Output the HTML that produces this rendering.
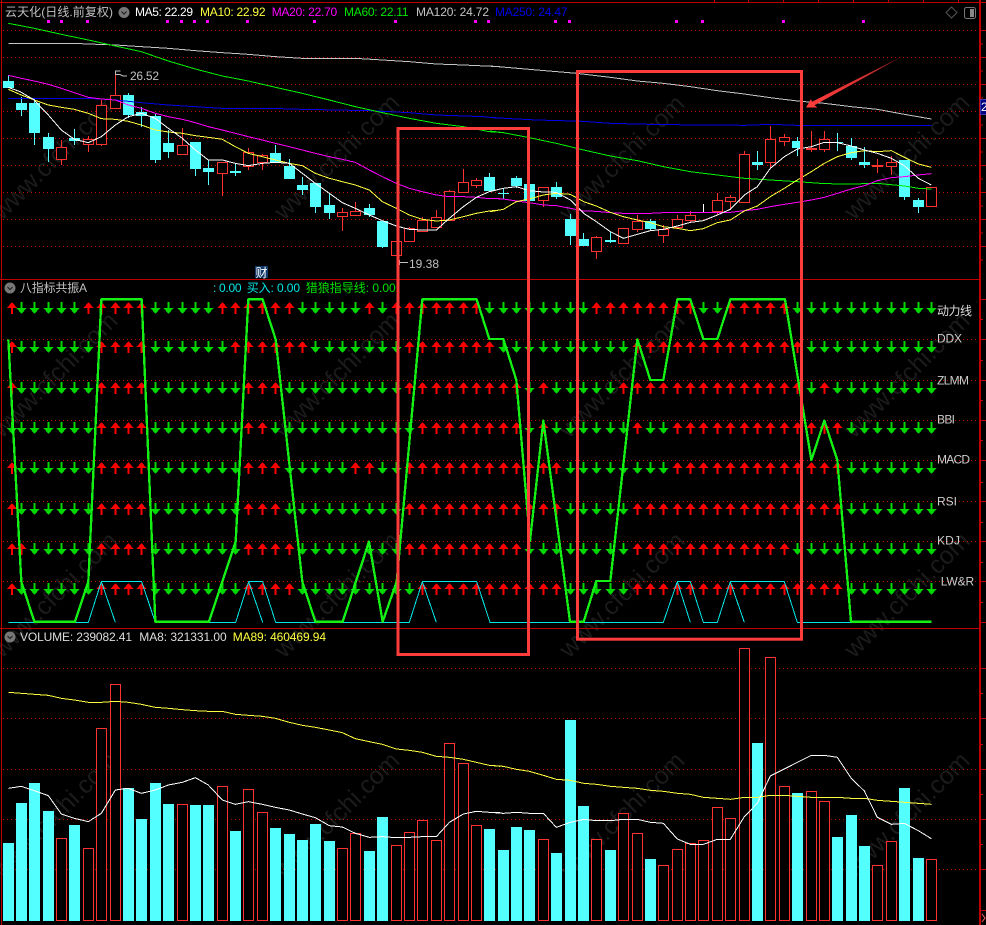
<!DOCTYPE html>
<html><head><meta charset="utf-8"><title>云天化</title>
<style>
html,body{margin:0;padding:0;background:#000;overflow:hidden}
svg{display:block}
text{font-family:"Liberation Sans","Noto Sans CJK SC",sans-serif;font-size:12px}
.t{fill:none;stroke-width:3;stroke-linejoin:round;shape-rendering:crispEdges}
.g{fill:none;stroke-width:7;stroke-linejoin:round;stroke:#14f014;shape-rendering:crispEdges}
.wm text{font-size:25px;fill:#1b1b1b}
</style></head><body>
<svg id="s" xmlns="http://www.w3.org/2000/svg" width="986" height="925" viewBox="0 0 986 925">
<rect width="986" height="925" fill="#000"/>
<g class="wm">
<text transform="translate(55 157) rotate(-45)" text-anchor="middle" y="8">www.cfchi.com</text>
<text transform="translate(337 157) rotate(-45)" text-anchor="middle" y="8">www.cfchi.com</text>
<text transform="translate(622 158) rotate(-45)" text-anchor="middle" y="8">www.cfchi.com</text>
<text transform="translate(907 157) rotate(-45)" text-anchor="middle" y="8">www.cfchi.com</text>
<text transform="translate(55 375) rotate(-45)" text-anchor="middle" y="8">www.cfchi.com</text>
<text transform="translate(337 375) rotate(-45)" text-anchor="middle" y="8">www.cfchi.com</text>
<text transform="translate(622 375) rotate(-45)" text-anchor="middle" y="8">www.cfchi.com</text>
<text transform="translate(907 375) rotate(-45)" text-anchor="middle" y="8">www.cfchi.com</text>
<text transform="translate(55 595) rotate(-45)" text-anchor="middle" y="8">www.cfchi.com</text>
<text transform="translate(337 595) rotate(-45)" text-anchor="middle" y="8">www.cfchi.com</text>
<text transform="translate(622 595) rotate(-45)" text-anchor="middle" y="8">www.cfchi.com</text>
<text transform="translate(907 595) rotate(-45)" text-anchor="middle" y="8">www.cfchi.com</text>
<text transform="translate(55 815) rotate(-45)" text-anchor="middle" y="8">www.cfchi.com</text>
<text transform="translate(337 815) rotate(-45)" text-anchor="middle" y="8">www.cfchi.com</text>
<text transform="translate(622 815) rotate(-45)" text-anchor="middle" y="8">www.cfchi.com</text>
<text transform="translate(907 815) rotate(-45)" text-anchor="middle" y="8">www.cfchi.com</text>
</g>
<path fill="none" stroke="#c00000" stroke-dasharray="1 3" d="M3 30.5H979M3 57.5H979M3 84.5H979M3 111.5H979M3 138.5H979M3 165.5H979M3 192.5H979M3 219.5H979M3 246.5H979M3 339.5H979M3 380.5H979M3 420.5H979M3 460.5H979M3 501.5H979M3 541.5H979M3 581.5H979M3 668.5H979M3 718.5H979M3 769.5H979M3 819.5H979M3 869.5H979"/>
<path fill="none" stroke="#c00000" d="M0 2.5H986M1.5 0V925M0 279.5H980M0 628.5H980M714.5 0V2M748.5 0V2M783.5 0V2M818.5 0V2M853.5 0V2M888.5 0V2M923.5 0V2M958.5 0V2"/>
<path fill="none" stroke="#c00000" stroke-width="2" d="M980 0V925"/>
<path fill="none" stroke="#c00000" d="M980 30.5h6M980 44h3M980 57.5h6M980 71h3M980 84.5h6M980 98h3M980 111.5h6M980 125h3M980 138.5h6M980 152h3M980 165.5h6M980 179h3M980 192.5h6M980 206h3M980 219.5h6M980 233h3M980 246.5h6M980 260h3M980 299.5h6M980 319.5h3M980 339.5h6M980 360.5h3M980 380.5h6M980 400.5h3M980 420.5h6M980 440.5h3M980 460.5h6M980 482.5h3M980 501.5h6M980 522.5h3M980 541.5h6M980 562.5h3M980 581.5h6M980 602.5h3M980 622.5h6M980 668.5h6M980 693.5h3M980 718.5h6M980 744.5h3M980 769.5h6M980 794.5h3M980 819.5h6M980 844.5h3M980 869.5h6M980 910.5h6"/>
<path fill="none" stroke="#ff6060" d="M982 914l3 4-3 4"/>
<path d="M47 20h3v3h-3zM60 20h3v3h-3zM86 20h3v3h-3zM166 20h3v3h-3zM180 20h3v3h-3zM193 20h3v3h-3zM206 20h3v3h-3zM246 20h3v3h-3zM313 20h3v3h-3zM394 20h3v3h-3zM474 20h3v3h-3zM487 20h3v3h-3zM554 20h3v3h-3zM568 20h3v3h-3zM675 20h3v3h-3zM701 20h3v3h-3zM782 20h3v3h-3zM862 20h3v3h-3z" fill="#ff00ff"/>
<g id="c"></g>
<g id="a" shape-rendering="crispEdges"></g>
<g id="v"></g>

<!-- price panel lines -->
<g transform="scale(.33333)">
<polyline class="t" stroke="#c4c4c4" points="25,130 240,131 346,135 424,140 505,145 586,152 667,158 745,163 826,170 907,175 1066,175 1147,180 1228,185 1309,192 1390,195 1500,200"/>
<polyline class="t" stroke="#0000e6" points="25,295 265,295 346,300 424,308 505,315 586,320 667,325 807,325 907,328 1108,332 1228,338 1309,345 1450,350 1500,355"/>
<polyline class="t" stroke="#00f000" points="25,70 103,85 184,103 265,120 346,138 424,155 505,183 586,207 667,228 745,243 826,262 907,280 988,300 1066,320 1147,338 1228,355 1309,370 1390,380 1468,395 1500,397"/>
<polyline class="t" stroke="#ff00ff" points="25,226 64,235 103,243 145,253 184,265 223,278 265,292 304,297 346,300 385,315 424,325 466,340 505,350 547,358 586,368 625,380 667,390 706,400 745,410 787,420 826,430 868,440 907,450 946,460 988,470 1027,478 1066,487 1108,510 1147,530 1189,550 1228,565 1267,575 1309,585 1348,590 1390,590 1429,592 1468,596 1500,595"/>
<polyline class="t" stroke="#ffff40" points="25,268 64,285 103,300 145,315 184,322 223,328 265,340 304,356 346,358 385,364 424,375 466,390 505,396 547,400 586,407 625,412 667,418 706,440 745,460 787,470 826,480 868,490 907,497 946,520 988,535 1027,545 1066,555 1108,570 1147,605 1189,625 1228,645 1267,658 1309,663 1348,660 1390,650 1429,640 1468,633 1500,630"/>
<polyline class="t" stroke="#fff" points="25,262 60,275 100,298 145,345 184,390 223,418 265,428 304,410 346,375 385,350 424,340 466,355 505,385 547,415 586,450 625,480 667,480 706,490 745,497 787,490 826,487 868,490 907,520 946,550 988,580 1027,608 1066,625 1108,645 1147,662 1189,678 1228,688 1267,690 1309,690 1348,655 1390,620 1429,592 1468,575 1500,567"/>
</g>
<g transform="translate(490 0) scale(.33333)">
<polyline class="t" stroke="#c4c4c4" points="0,198 60,203 141,210 260,220 361,232 442,243 520,250 601,260 682,272 763,282 841,293 922,303 1003,310 1084,320 1162,328 1243,343 1324,357"/>
<polyline class="t" stroke="#0000e6" points="0,352 60,356 141,360 281,364 361,370 520,374 702,375 763,376 841,373 922,376 1324,376"/>
<polyline class="t" stroke="#00f000" points="0,393 40,398 118,413 199,430 281,450 361,468 442,482 520,500 601,515 682,525 763,535 841,540 922,545 964,548 1003,551 1084,552 1162,550 1243,558 1285,565 1324,567"/>
<polyline class="t" stroke="#ff00ff" points="0,595 40,597 79,603 118,608 160,615 199,617 241,625 281,633 319,634 361,638 400,640 481,640 520,638 601,637 721,637 763,632 802,628 841,620 883,613 922,607 964,600 1003,592 1042,580 1084,567 1123,557 1162,542 1204,533 1243,530 1285,525 1324,521"/>
<polyline class="t" stroke="#ffff40" points="0,635 40,628 79,605 118,597 160,585 199,580 241,583 281,605 319,618 361,637 400,650 442,660 481,668 520,680 562,685 601,692 640,686 682,668 721,660 763,633 802,618 841,590 883,565 922,540 964,515 1003,490 1042,470 1084,458 1123,452 1162,455 1204,452 1243,472 1285,492 1324,502"/>
<polyline class="t" stroke="#fff" points="0,575 40,565 79,560 118,572 160,576 199,577 241,600 281,640 319,665 361,695 400,715 442,703 481,692 520,688 562,678 601,667 640,662 682,645 721,628 763,585 802,560 841,505 883,470 922,447 964,440 1003,427 1042,428 1084,438 1123,450 1162,460 1204,475 1243,497 1285,535 1324,555"/>
</g>

<!-- indicator panel lines -->
<g transform="translate(0 275) scale(.33333)">
<polyline class="t" stroke="#00e6e6" points="25,1042 265,1042 304,920 425,920 466,1042 707,1042 746,920 788,920 827,1042 1228,1042 1267,920 1430,920 1470,1042 1500,1042"/>
<path class="t" stroke="#00e6e6" d="M304 920L346 1042M746 920L788 1042M1267 920L1309 1042"/>
<polyline class="g" points="25,193 64,920 103,1040 225,1040 265,920 304,73 425,73 466,1040 627,1040 707,800 745,73 788,73 827,193 907,920 946,1040 1028,1040 1107,800 1148,1040 1190,920 1267,73 1430,73 1468,192 1500,192"/>
</g>
<g transform="translate(490 275) scale(.33333)">
<polyline class="t" stroke="#00e6e6" points="0,1042 520,1042 562,920 601,920 640,1042 682,1042 721,920 883,920 922,1042 1324,1042"/>
<path class="t" stroke="#00e6e6" d="M562 920L601 1042M721 920L763 1042"/>
<polyline class="g" points="0,192 40,192 79,315 120,798 160,437 240,1040 281,1040 319,918 361,918 442,193 481,315 520,315 562,73 601,73 640,192 682,192 721,73 885,73 964,555 1003,437 1042,555 1083,1040 1324,1040"/>
</g>

<!-- volume panel lines -->
<g transform="translate(0 625) scale(.33333)">
<polyline class="t" stroke="#ffff40" points="25,202 64,205 103,208 145,211 184,220 223,225 265,232 304,232 346,229 385,232 424,238 466,247 505,250 547,254 586,257 625,259 667,259 706,268 745,271 787,274 826,280 868,292 907,301 946,307 988,315 1027,323 1066,341 1108,350 1147,358 1189,372 1228,376 1267,382 1309,394 1348,397 1390,403 1429,412 1468,421 1500,424"/>
<polyline class="t" stroke="#fff" points="25,490 64,484 103,497 145,512 184,567 223,580 265,590 304,565 346,495 385,490 424,505 466,495 505,480 547,472 586,458 625,480 667,525 706,538 745,530 787,538 826,547 868,555 907,567 946,578 988,602 1027,606 1066,625 1108,637 1147,635 1189,638 1228,637 1267,635 1309,635 1348,592 1390,567 1429,559 1468,562 1500,563"/>
</g>
<g transform="translate(490 625) scale(.33333)">
<polyline class="t" stroke="#ffff40" points="0,421 40,424 79,433 118,439 160,451 199,463 241,466 281,475 319,478 361,484 400,487 442,490 481,496 520,499 562,505 601,508 640,517 682,520 721,523 763,517 802,517 841,511 883,511 922,514 964,517 1003,517 1042,517 1084,520 1123,520 1162,526 1204,529 1243,532 1285,535 1324,538"/>
<polyline class="t" stroke="#fff" points="0,562 40,565 79,562 118,565 160,565 199,607 241,592 281,583 319,587 361,587 400,583 442,583 481,592 520,595 562,642 601,658 640,658 682,643 721,643 763,575 802,535 841,453 883,432 922,412 964,391 1003,391 1042,397 1084,460 1123,498 1162,577 1204,598 1243,595 1285,617 1324,641"/>
</g>

<!-- annotations on chart -->
<path d="M115.5 75V71h5M116 74.5h4l3 1.5h4M399.5 260v5M400 262.5h8" fill="none" stroke="#c0c0c0"/>
<text x="130" y="80" fill="#c0c0c0" textLength="29">26.52</text>
<text x="409" y="268" fill="#c0c0c0" textLength="30">19.38</text>
<rect x="255" y="266" width="13" height="12" fill="#123a6a"/>
<text x="255.5" y="277" fill="#fff">财</text>

<!-- header price -->
<text x="5" y="16" fill="#c0c0c0" textLength="108">云天化(日线.前复权)</text>
<circle cx="124" cy="12.5" r="5.5" fill="#777"/><path d="M121.5 11.5l2.5 2.5 2.5-2.5" fill="none" stroke="#222" stroke-width="1.2"/>
<text x="135" y="16" fill="#fff" textLength="58">MA5: 22.29</text>
<text x="200" y="16" fill="#ffff40" textLength="65.5">MA10: 22.92</text>
<text x="271.7" y="16" fill="#ff00ff" textLength="65.5">MA20: 22.70</text>
<text x="344" y="16" fill="#00e600" textLength="64.5">MA60: 22.11</text>
<text x="416" y="16" fill="#c4c4c4" textLength="73">MA120: 24.72</text>
<text x="495" y="16" fill="#0000e6" textLength="72.5">MA250: 24.47</text>
<path d="M951.5 7l5.5 5.5-5.5 5.5-5.5-5.5z" fill="none" stroke="#555"/>
<rect x="964.5" y="7.5" width="11" height="11" rx="2" fill="none" stroke="#777"/>
<rect x="970" y="9" width="4" height="8" fill="#888"/>
<rect x="980.5" y="99.5" width="6" height="15" fill="#000080" stroke="#3a3ab0"/>
<text x="981" y="111" fill="#fff">2</text>

<!-- header indicator -->
<circle cx="10" cy="288" r="5.5" fill="#777"/><path d="M7.5 287l2.5 2.5 2.5-2.5" fill="none" stroke="#222" stroke-width="1.2"/>
<text x="20" y="292" fill="#c0c0c0" textLength="67">八指标共振A</text>
<text x="213" y="292" fill="#00e6e6" textLength="28.5">: 0.00</text>
<text x="246.7" y="292" fill="#00e6e6" textLength="53.3">买入: 0.00</text>
<text x="305.7" y="292" fill="#00e000" textLength="90">猎狼指导线: 0.00</text>
<text x="937" y="315" fill="#ddd" textLength="35">动力线</text>
<text x="937" y="342.5" fill="#ccc" textLength="25">DDX</text>
<text x="937" y="384.5" fill="#ccc" textLength="32">ZLMM</text>
<text x="937" y="423.5" fill="#ccc" textLength="18">BBI</text>
<text x="937" y="463.5" fill="#ccc" textLength="33">MACD</text>
<text x="937" y="505.5" fill="#ccc" textLength="20">RSI</text>
<text x="937" y="544.5" fill="#ccc" textLength="23">KDJ</text>
<text x="940.7" y="585.5" fill="#ccc" textLength="33.5">LW&amp;R</text>

<!-- header volume -->
<circle cx="10" cy="637" r="5.5" fill="#777"/><path d="M7.5 636l2.5 2.5 2.5-2.5" fill="none" stroke="#222" stroke-width="1.2"/>
<text x="20" y="641" fill="#ddd" textLength="112">VOLUME: 239082.41</text>
<text x="139.3" y="641" fill="#ddd" textLength="87.4">MA8: 321331.00</text>
<text x="232.7" y="641" fill="#ffff40" textLength="93.3">MA89: 460469.94</text>

<!-- red marker rectangles and arrow -->
<rect x="398" y="128.5" width="130.5" height="526" fill="none" stroke="#ff3c3c" stroke-width="3"/>
<rect x="577.5" y="71.5" width="224" height="567.7" fill="none" stroke="#ff3c3c" stroke-width="3"/>
<defs><linearGradient id="g" gradientUnits="userSpaceOnUse" x1="905" y1="55" x2="810" y2="105"><stop offset="0" stop-color="#601010"/><stop offset=".4" stop-color="#d03030"/><stop offset="1" stop-color="#ff3c3c"/></linearGradient></defs>
<polygon points="806,107.5 817.5,107.5 814.5,105.3 905,55 812,101.7 811,99" fill="url(#g)"/>
</svg>
<script>
var X=[8,21,34,48,61,74,88,101,115,128,141,155,168,182,195,208,222,235,248,262,275,289,302,315,329,342,355,369,382,396,409,422,436,449,463,476,489,503,516,529,543,556,570,583,596,610,623,637,650,663,677,690,703,717,730,744,757,770,784,797,811,824,837,851,864,877,891,904,918,931];
var C="c75,81,88,88 c97,103,110,116 c98,103,133,145 c133,137,149,162 r140,147,159,165 c129,138,141,145 r136,139,144,152 r100,105,144,146 r72,95,108,108 c93,95,115,118 c107,112,116,127 c114,116,160,163 c130,143,152,158 r128,145,154,154 c142,142,169,176 c160,168,172,185 r162,162,173,196 c164,171,173,176 r148,152,166,170 r154,155,162,170 c145,153,163,163 c159,166,179,179 c177,185,190,195 c183,183,207,213 c193,205,213,219 r208,212,216,231 r202,211,215,215 c204,208,215,217 c221,221,247,248 r241,241,255,255 r227,228,241,242 r217,220,231,232 r210,217,227,227 r190,191,220,220 r169,182,192,192 r178,180,185,188 c173,177,191,191 c188,193,194,199 c176,178,186,188 c184,184,201,201 r187,187,200,207 c182,187,197,199 c214,219,236,245 c233,239,246,246 r236,237,251,259 c232,240,242,243 r228,228,243,243 r215,221,229,232 c219,221,229,230 r225,229,235,243 r215,219,227,227 r211,215,220,222 w204,208,208,212 r193,200,211,215 r195,197,201,210 r151,154,202,202 c151,162,165,170 r126,139,162,169 r134,137,141,146 c137,141,148,156 r131,148,149,152 r131,139,149,152 c133,142,143,151 c138,146,158,160 c147,162,165,168 r159,165,166,173 r156,162,166,175 c160,160,197,200 c198,200,207,213 r187,187,206,207".split(" ");
var CY="#54ffff",RD="#ff3232",o="";
C.forEach(function(s,i){var k=s[0],p=s.slice(1).split(",").map(Number),x=X[i];
var col=k=="c"?CY:k=="r"?RD:"#fff";
o+='<path d="M'+(x+.5)+' '+p[0]+'V'+p[3]+'" stroke="'+col+'"/>';
if(k=="c")o+='<rect x="'+(x-5)+'" y="'+p[1]+'" width="11" height="'+Math.max(p[2]-p[1],1)+'" fill="'+CY+'"/>';
else if(k=="r")o+='<rect x="'+(x-4.5)+'" y="'+(p[1]+.5)+'" width="10" height="'+Math.max(p[2]-p[1],1)+'" fill="#000" stroke="'+RD+'"/>';
});
document.getElementById("c").innerHTML=o;
var R=[[308,[1,5,5,5,6,5,1,1,7,8,8,2,5,11]],[347,[1,6,4,6,6,7,7,10,13,10]],[388,[1,6,4,7,3,9,9,1,1,5,14,1,1,8]],[428,[0,7,4,7,2,11,8,1,1,6,1,2,13,7]],[468,[1,6,4,7,3,5,2,2,12,8,13,7]],[509,[1,6,4,7,3,9,12,5,16,7]],[549,[2,5,4,7,4,8,9,8,12,11]],[589,[1,6,4,7,4,9,11,5,16,7]]];
var u="",d="";
R.forEach(function(r){var y=r[0],i=0;r[1].forEach(function(n,j){for(var q=0;q<n;q++,i++){var x=(i==0?12:X[i]+.5);
if(j%2==0)u+="M"+x+" "+(y-6)+"L"+(x+5)+" "+y+"H"+(x+1)+"V"+(y+6)+"H"+(x-1)+"V"+y+"H"+(x-5)+"Z";
else d+="M"+(x-1)+" "+(y-6)+"H"+(x+1)+"V"+y+"H"+(x+5)+"L"+x+" "+(y+6)+"L"+(x-5)+" "+y+"H"+(x-1)+"Z";
}});});
document.getElementById("a").innerHTML='<path fill="#ff0000" d="'+u+'"/><path fill="#00d800" d="'+d+'"/>';
var V="c654 c534 c474 c558 r640 c600 r670 r310 r178 c490 c582 c474 c537 r538 c540 c540 r484 c618 r493 r562 c609 c627 c645 c597 c648 r670 r625 c678 c576 r661 r622 r586 r646 r355 r415 r601 c612 c675 c606 c615 r643 c684 c285 c543 r643 c675 r565 r625 c702 r721 r673 r655 r646 r547 r580 r70 c354 r97 r484 c504 r499 r529 c636 c570 c663 r721 r649 c489 c699 r703".split(" ");
o="";
V.forEach(function(s,i){var t=Math.round(625+(+s.slice(1))/3),x=X[i];
if(s[0]=="c")o+='<rect x="'+(x-5)+'" y="'+t+'" width="11" height="'+(921-t)+'" fill="'+CY+'"/>';
else o+='<rect x="'+(x-4.5)+'" y="'+(t+.5)+'" width="10" height="'+(920-t)+'" fill="#000" stroke="'+RD+'"/>';
});
document.getElementById("v").innerHTML=o;
</script>
</body></html>
